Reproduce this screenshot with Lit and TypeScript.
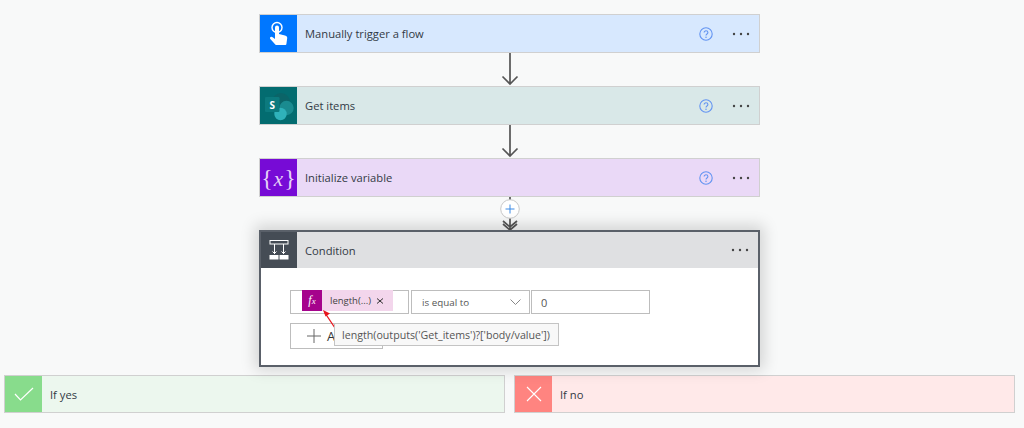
import { LitElement, html, css, svg } from "lit";
import { customElement } from "lit/decorators.js";

const help = html`<svg class="help" width="14" height="14" viewBox="0 0 14 14" fill="none"><circle cx="7" cy="7" r="6.200" stroke="#6394f2" stroke-width="1.100"/><path d="M5.100 5.600C5.100 4.500 6 3.800 7 3.800s1.900.7 1.900 1.700c0 1.500-1.900 1.400-1.900 3" stroke="#6394f2" stroke-width="1.100"/><circle cx="7" cy="10.300" r=".75" fill="#6394f2"/></svg>`;
const dots = html`<svg class="dots" width="18" height="4" viewBox="0 0 18 4"><circle cx="2" cy="2" r="1.200" fill="#444"/><circle cx="9" cy="2" r="1.200" fill="#444"/><circle cx="16" cy="2" r="1.200" fill="#444"/></svg>`;

const touch = svg`<svg width="24" height="26" viewBox="0 0 24 26"><circle cx="10" cy="6.500" r="5" fill="none" stroke="#fff" stroke-width="1.400"/><path d="M8 6.500a2 2 0 0 1 4 0V13l6 1.400c1.600.4 2.400 1.300 2.200 2.800L19.400 23c-.1.7-.6 1-1.200 1H9.600c-.6 0-1-.2-1.300-.6L3.300 18c-.8-1-.1-2.200 1.100-2.200.6 0 1.100.2 1.600.6L8 18Z" fill="#fff"/></svg>`;
const sp = svg`<svg width="32" height="32" viewBox="0 0 32 32"><circle cx="18" cy="12" r="9" fill="#0b6468"/><circle cx="23.500" cy="18" r="7.200" fill="#1a8b90"/><circle cx="17.500" cy="24" r="6.200" fill="#2fb2ba"/><rect x="2" y="7" width="14.500" height="15" rx="1.200" fill="#0c7a7e"/><text x="9.200" y="19" class="sp-s">S</text></svg>`;
const cond = svg`<svg width="22" height="22" viewBox="0 0 22 22" fill="none" stroke="#fff" stroke-width="1"><rect x="2" y="1.500" width="18" height="3.500"/><path d="M6.500 5v10M15.500 5v10M4.500 12.500l2 2 2-2M13.500 12.500l2 2 2-2"/><rect x="1.500" y="16" width="9" height="4.500" fill="#fff" stroke="none"/><rect x="11.500" y="16" width="9" height="4.500" fill="#fff" stroke="none"/></svg>`;

@customElement("app-root")
export class AppRoot extends LitElement {
  static styles = css`
    :host { display: block; width: 1024px; height: 428px; background: #f8f9f9; overflow: hidden;
      font-family: "Open Sans", "Noto Sans", sans-serif; font-size: 11.200px; color: #323a45; }
    .flow { display: flex; flex-direction: column; align-items: center; width: 501px; margin-left: 259px; padding-top: 14px; box-sizing: content-box; }
    .card { width: 501px; height: 39px; box-sizing: border-box; border: 1px solid #d0d0d0; display: flex; align-items: center; flex: none; }
    .icon { width: 37px; align-self: stretch; flex: none; display: flex; align-items: center; justify-content: center; }
    .title { flex: 1; margin-left: 8px; }
    .help { margin-right: 19px; }
    .dots { margin-right: 9px; }
    .blue { background: #d7e8fe; } .blue .icon { background: #0077ff; }
    .teal { background: #d9e8e8; } .teal .icon { background: #036c70; }
    .purple { background: #ead9f7; } .purple .icon { background: #770bd6; }
    .xvar { color: #e6d2f8; font-family: "Liberation Serif", serif; font-size: 24px; white-space: nowrap; line-height: 1; }
    .xvar i { font-size: 21px; margin: 0 1px; }
    .sp-s { font-family: "Open Sans", sans-serif; font-size: 10px; font-weight: 700; fill: #fff; text-anchor: middle; }
    .arrow { height: 33px; flex: none; display: block; }
    .gap { height: 33px; flex: none; position: relative; width: 30px; display: flex; justify-content: center; }
    .plus { position: absolute; left: 5px; top: 2px; width: 20px; height: 20px; }
    .condition { width: 501px; height: 137px; box-sizing: border-box; border: 2px solid #5a6069; background: #fff; flex: none;
      box-shadow: 0 -1px 14px 4px rgba(0,0,0,.15); position: relative; }
    .chead { height: 36px; background: #dfe0e2; display: flex; align-items: center; }
    .chead .icon { background: #454c55; width: 36px; }
    .row { display: flex; margin: 22px 0 0 29px; gap: 2px; height: 24px; }
    .box { box-sizing: border-box; border: 1px solid #bdbdbd; height: 24px; background: #fff; display: flex; align-items: center; font-size: 9.800px; color: #555; }
    .left { width: 119px; padding-left: 11px; align-items: flex-start; }
    .token { display: flex; align-items: center; height: 21px; background: #f3d6ec; width: 91px; font-size: 9.500px; color: #444; margin-top: -1px; }
    .fx { width: 20px; height: 21px; background: #a5038c; color: #fff; display: flex; align-items: center; justify-content: center;
      font-family: "Liberation Serif", serif; font-style: italic; font-size: 12px; margin-right: 8px; flex: none; }
    .fx sub { font-size: 9px; vertical-align: -1px; line-height: 0; }
    .tx { margin-left: 5px; display: block; }
    .op { width: 119px; padding: 0 8px 0 10px; justify-content: space-between; }
    .val { width: 119px; padding-left: 9px; font-size: 11px; margin-left: -1px; }
    .add { box-sizing: border-box; border: 1px solid #bdbdbd; width: 93px; height: 26px; margin: 9px 0 0 29px; display: flex; align-items: center; padding-left: 16px; gap: 6px; font-size: 13px; color: #333; background: #fff; }
    .tip { position: absolute; left: 73px; top: 91px; width: 225px; height: 23px; box-sizing: border-box; border: 1px solid #c4c4c4; background: #f8f8f8;
      display: flex; align-items: center; padding-left: 7px; font-size: 10.650px; color: #555; white-space: nowrap; }
    .red { position: absolute; left: 61px; top: 77px; }
    .branches { display: flex; gap: 9px; padding: 8px 0 0 4px; }
    .branches .card { width: 501px; height: 38px; }
    .yes { background: #ecf7ee; } .yes .icon { background: #88dc8c; }
    .no { background: #ffe9e9; } .no .icon { background: #ff8480; }
  `;

  render() {
    const arrow = html`<svg class="arrow" width="18" height="33" viewBox="0 0 18 33" fill="none" stroke="#555" stroke-width="1.700"><path d="M9 0V31M1.500 23.500l7.500 7.500 7.500-7.500"/></svg>`;
    return html`
      <div class="flow">
        <div class="card blue"><div class="icon">${touch}</div><div class="title">Manually trigger a flow</div>${help}${dots}</div>
        ${arrow}
        <div class="card teal"><div class="icon">${sp}</div><div class="title">Get items</div>${help}${dots}</div>
        ${arrow}
        <div class="card purple"><div class="icon"><span class="xvar">{<i>x</i>}</span></div><div class="title">Initialize variable</div>${help}${dots}</div>
        <div class="gap">
          <svg width="18" height="33" viewBox="0 0 18 33" fill="none" stroke="#555" stroke-width="1.700"><path d="M9 0V33M2 24l7 6 7-6M2 27l7 6 7-6"/></svg>
          <svg class="plus" viewBox="0 0 20 20" fill="none"><circle cx="10" cy="10" r="9.300" fill="#fff" stroke="#c8c8c8"/><path d="M10 5.500v9M5.500 10h9" stroke="#3b8ae6"/></svg>
        </div>
        <div class="condition">
          <div class="chead"><div class="icon">${cond}</div><div class="title">Condition</div>${dots}</div>
          <div class="row">
            <div class="box left"><div class="token"><div class="fx">f<sub>x</sub></div>length(...)<svg class="tx" width="8" height="8" viewBox="0 0 8 8" stroke="#333"><path d="M1 1.500l6 5M7 1.500l-6 5"/></svg></div></div>
            <div class="box op">is equal to<svg width="11" height="6" viewBox="0 0 11 6" fill="none" stroke="#888"><path d="M.5.500l5 5 5-5"/></svg></div>
            <div class="box val">0</div>
          </div>
          <div class="add"><svg width="14" height="14" viewBox="0 0 14 14" stroke="#666"><path d="M7 0v14M0 7h14"/></svg>A</div>
          <svg class="red" width="16" height="22" viewBox="0 0 16 22" fill="none"><path d="M13 19L3 4" stroke="#e8141c" stroke-width="1.300"/><path d="M1 1l7 3.500-4.500 3Z" fill="#e8141c"/></svg>
          <div class="tip">length(outputs('Get_items')?['body/value'])</div>
        </div>
      </div>
      <div class="branches">
        <div class="card yes"><div class="icon"><svg width="20" height="14" viewBox="0 0 20 14" fill="none" stroke="#fff" stroke-width="1.200"><path d="M1 7l5.500 6L19 1"/></svg></div><div class="title">If yes</div></div>
        <div class="card no"><div class="icon"><svg width="16" height="16" viewBox="0 0 16 16" fill="none" stroke="#fff" stroke-width="1.100"><path d="M1 1l14 14M15 1L1 15"/></svg></div><div class="title">If no</div></div>
      </div>
    `;
  }
}
